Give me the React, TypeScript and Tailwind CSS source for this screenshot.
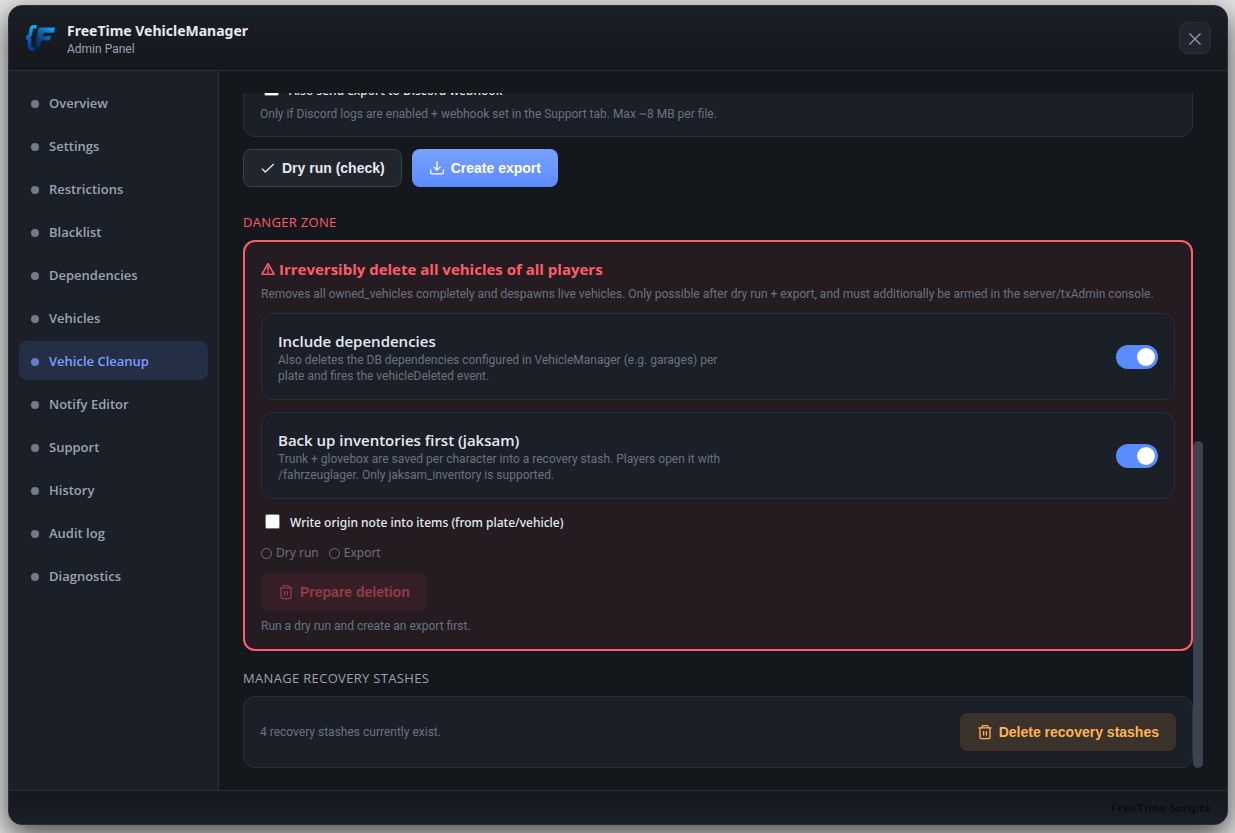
import { ReactNode, useState } from "react";

const navItems = [
  "Overview",
  "Settings",
  "Restrictions",
  "Blacklist",
  "Dependencies",
  "Vehicles",
  "Vehicle Cleanup",
  "Notify Editor",
  "Support",
  "History",
  "Audit log",
  "Diagnostics",
];

function Logo() {
  return (
    <svg viewBox="0 0 30 28" className="h-7 w-[30px]" fill="none" aria-hidden="true">
      <defs>
        <linearGradient id="brace" x1="0" y1="0" x2="0" y2="1">
          <stop offset="0" stopColor="#12a8f4" />
          <stop offset="0.5" stopColor="#0a63cc" />
          <stop offset="1" stopColor="#083a9c" />
        </linearGradient>
        <linearGradient id="mark" x1="1" y1="0" x2="0.3" y2="1">
          <stop offset="0" stopColor="#10b2ff" />
          <stop offset="0.5" stopColor="#0b5ba8" />
          <stop offset="1" stopColor="#0a2250" />
        </linearGradient>
      </defs>
      <path
        d="M11.6 2.7H9Q6.6 2.7 6.2 5.2L5.6 9.5Q5.2 12.6 1.6 13.4Q4.8 14.2 4.6 17L4.4 21Q4.4 25 7.4 25H9.5"
        stroke="url(#brace)"
        strokeWidth="3.6"
      />
      <path
        d="M15.5 3.5H30L28.8 8.8H18.8L17.8 12H26L24.8 16.6H16.4L14.6 23Q13.8 26 9.6 26L12.4 9Q12.9 3.5 15.5 3.5Z"
        fill="url(#mark)"
      />
    </svg>
  );
}

type IconProps = { className?: string };

function CheckIcon({ className }: IconProps) {
  return (
    <svg viewBox="0 0 16 16" className={className} fill="none" stroke="currentColor" strokeWidth="1.3" aria-hidden="true">
      <path d="M2 8.6l3.3 3.4L13.8 4" />
    </svg>
  );
}

function DownloadIcon({ className }: IconProps) {
  return (
    <svg viewBox="0 0 16 16" className={className} fill="none" stroke="currentColor" strokeWidth="1.3" aria-hidden="true">
      <path d="M8 1.2v8.6M4.5 6.6L8 10 11.5 6.6M1.7 9.5v2.9q0 1.4 1.4 1.4h9.8q1.4 0 1.4-1.4V9.5" />
    </svg>
  );
}

function TrashIcon({ className }: IconProps) {
  return (
    <svg viewBox="0 0 16 16" className={className} fill="none" stroke="currentColor" strokeWidth="1.3" aria-hidden="true">
      <path d="M1.5 3.8h13M5 3.8V2.7q0-1 1-1h4q1 0 1 1v1.1M3 3.8v9.4q0 1.4 1.4 1.4h7.2q1.4 0 1.4-1.4V3.8M6.6 7v4.6M9.4 7v4.6" />
    </svg>
  );
}

function WarningIcon({ className }: IconProps) {
  return (
    <svg viewBox="0 0 14 14" className={className} fill="none" stroke="currentColor" strokeWidth="1.6" aria-hidden="true">
      <path d="M7 1.6L13 12.2H1Z" strokeLinejoin="round" />
      <path d="M7 4.6v4.2M7 9.6v1.6" strokeWidth="1.5" />
    </svg>
  );
}

type ToggleCardProps = {
  id: string;
  title: string;
  children: ReactNode;
};

function ToggleCard({ id, title, children }: ToggleCardProps) {
  const [checked, setChecked] = useState(true);

  return (
    <div className="flex items-center justify-between gap-4 rounded-xl border border-[#2a303b] bg-[#1b1f27] px-4 pt-4 pb-[15px]">
      <div className="max-w-[445px]">
        <label
          htmlFor={id}
          className="block font-['Open_Sans',sans-serif] text-[15px] leading-[22px] font-semibold text-[#e6e9f0]"
        >
          {title}
        </label>
        <p className="font-['Roboto',sans-serif] text-xs leading-4 text-[#6b7280]">{children}</p>
      </div>
      <input
        id={id}
        type="checkbox"
        role="switch"
        checked={checked}
        onChange={(event) => setChecked(event.target.checked)}
        className="flex h-6 w-[42px] shrink-0 appearance-none items-center rounded-full bg-[#3a414d] px-[3px] before:size-[18px] before:rounded-full before:bg-white checked:justify-end checked:bg-[#5b8cff]"
      />
    </div>
  );
}

function Sidebar() {
  const [active, setActive] = useState("Vehicle Cleanup");

  return (
    <nav className="flex w-[210px] shrink-0 flex-col gap-1 border-r border-[#2a303b] bg-[#1b1f27] px-2.5 py-3">
      {navItems.map((item) => (
        <button
          key={item}
          type="button"
          onClick={() => setActive(item)}
          className={`flex h-[39px] items-center gap-2.5 rounded-lg px-3 pt-0.5 text-left font-['Open_Sans',sans-serif] text-[13px] font-semibold ${
            item === active ? "bg-[#242e45] text-[#7aa0ff]" : "text-[#9aa3b2]"
          }`}
        >
          <span className="size-2 rounded-full bg-current opacity-70" />
          {item}
        </button>
      ))}
    </nav>
  );
}

export default function App() {
  const [discord, setDiscord] = useState(false);
  const [originNote, setOriginNote] = useState(false);

  return (
    <div className="h-screen overflow-hidden bg-[#e4e4e5] pt-[5px] pr-[7px] pb-2 pl-2 font-['Noto_Sans','Open_Sans',sans-serif] text-[#e6e9f0]">
      <div className="flex h-full flex-col overflow-hidden rounded-[14px] border border-[#2a303b] bg-[#14171b] shadow-[0_10px_30px_rgba(0,0,0,0.7)]">
        <header className="flex h-[65px] shrink-0 items-center justify-between border-b border-[#2a303b] bg-linear-to-b from-[#1b1f27] to-[#14171b] px-4">
          <div className="flex items-center gap-3">
            <Logo />
            <div className="pt-0.5">
              <h1 className="text-sm leading-5 font-bold">FreeTime VehicleManager</h1>
              <p className="font-['Roboto',sans-serif] text-xs leading-4 text-[#9aa3b2]">Admin Panel</p>
            </div>
          </div>
          <button
            type="button"
            aria-label="Close"
            className="grid size-8 place-items-center rounded-lg border border-[#2a303b] bg-[#21252e] pt-0.5 text-[#9aa3b2]"
          >
            <svg viewBox="0 0 12 12" className="size-3" stroke="currentColor" strokeWidth="1.2" aria-hidden="true">
              <path d="M.5.5l11 11M11.5.5l-11 11" />
            </svg>
          </button>
        </header>

        <div className="flex min-h-0 flex-1">
          <Sidebar />

          <main className="flex min-w-0 flex-1 px-6 py-[22px]">
            <div className="flex min-w-0 flex-1 flex-col justify-end overflow-hidden">
              <section className="shrink-0 rounded-xl border border-[#2a303b] bg-[#1b1f27] px-4 pt-4 pb-[13px]">
                <label className="flex h-4 items-start gap-2.5 px-1 text-xs leading-5 font-medium">
                  <input
                    type="checkbox"
                    checked={discord}
                    onChange={(event) => setDiscord(event.target.checked)}
                    className="size-[15px] appearance-none rounded-xs border border-[#767676] bg-white checked:bg-[#5b8cff]"
                  />
                  Also send export to Discord webhook
                </label>
                <p className="mt-2 font-['Roboto',sans-serif] text-xs leading-[18px] text-[#6b7280]">
                  Only if Discord logs are enabled + webhook set in the Support tab. Max ~8 MB per file.
                </p>
              </section>

              <div className="mt-3 flex shrink-0 gap-2.5 font-['Liberation_Sans',Arial,sans-serif] text-sm font-semibold">
                <button
                  type="button"
                  className="flex h-[38px] items-center gap-1.5 rounded-lg border border-[#3a414d] bg-[#21252e] px-4"
                >
                  <CheckIcon className="size-4" />
                  Dry run (check)
                </button>
                <button
                  type="button"
                  className="flex h-[38px] items-center gap-1.5 rounded-lg bg-linear-to-b from-[#7aa0ff] to-[#5b8cff] px-[17px] text-white"
                >
                  <DownloadIcon className="size-4" />
                  Create export
                </button>
              </div>

              <h2 className="mt-[27px] shrink-0 font-['Open_Sans',sans-serif] text-[13px] leading-4 tracking-wide text-[#ff5c6c] uppercase">
                Danger zone
              </h2>

              <section className="mt-2.5 shrink-0 rounded-xl border-2 border-[#ff5c6c] bg-[#241c20] px-4 pt-4 pb-[15px]">
                <h3 className="flex items-center gap-1 font-['Open_Sans',sans-serif] text-[15px] leading-[22px] font-bold text-[#ff5c6c]">
                  <WarningIcon className="size-3.5" />
                  Irreversibly delete all vehicles of all players
                </h3>
                <p className="mt-1 font-['Roboto',sans-serif] text-xs leading-5 text-[#6b7280]">
                  Removes all owned_vehicles completely and despawns live vehicles. Only possible after dry run + export,
                  and must additionally be armed in the server/txAdmin console.
                </p>

                <div className="mt-[9px] flex flex-col gap-3">
                  <ToggleCard id="include-dependencies" title="Include dependencies">
                    Also deletes the DB dependencies configured in VehicleManager (e.g. garages) per plate and fires the
                    vehicleDeleted event.
                  </ToggleCard>
                  <ToggleCard id="backup-inventories" title="Back up inventories first (jaksam)">
                    Trunk + glovebox are saved per character into a recovery stash. Players open it with /fahrzeuglager.
                    Only jaksam_inventory is supported.
                  </ToggleCard>
                </div>

                <label className="mt-[15px] flex h-4 items-start gap-2.5 px-1 text-xs leading-[18px] font-medium">
                  <input
                    type="checkbox"
                    checked={originNote}
                    onChange={(event) => setOriginNote(event.target.checked)}
                    className="size-[15px] appearance-none rounded-xs border border-[#767676] bg-white checked:bg-[#5b8cff]"
                  />
                  Write origin note into items (from plate/vehicle)
                </label>

                <ul className="mt-[15px] flex gap-2.5 text-xs leading-4 text-[#6b7280]">
                  {["Dry run", "Export"].map((step) => (
                    <li key={step} className="flex items-center gap-1">
                      <span className="size-[11px] rounded-full border border-current" />
                      {step}
                    </li>
                  ))}
                </ul>

                <button
                  type="button"
                  disabled
                  className="mt-3 flex h-[38px] items-center gap-1.5 rounded-lg bg-[#351e25] px-[17px] font-['Liberation_Sans',Arial,sans-serif] text-sm font-semibold text-[#933b46]"
                >
                  <TrashIcon className="size-4" />
                  Prepare deletion
                </button>
                <p className="mt-[7px] font-['Roboto',sans-serif] text-xs leading-4 text-[#6b7280]">
                  Run a dry run and create an export first.
                </p>
              </section>

              <h2 className="mt-[19px] shrink-0 font-['Open_Sans',sans-serif] text-[13px] leading-4 tracking-wide text-[#9aa3b2] uppercase">
                Manage recovery stashes
              </h2>

              <section className="mt-2.5 flex shrink-0 items-center justify-between rounded-xl border border-[#2a303b] bg-[#1b1f27] p-4">
                <p className="font-['Roboto',sans-serif] text-xs leading-4 text-[#6b7280]">
                  4 recovery stashes currently exist.
                </p>
                <button
                  type="button"
                  className="flex h-[38px] items-center gap-1.5 rounded-lg bg-[#3b322c] px-[17px] font-['Liberation_Sans',Arial,sans-serif] text-sm font-semibold text-[#ffb454]"
                >
                  <TrashIcon className="size-4" />
                  Delete recovery stashes
                </button>
              </section>
            </div>

            <div className="flex w-2.5 shrink-0 flex-col justify-end" aria-hidden="true">
              <div className="h-[327px] rounded-full bg-[#3a434f]" />
            </div>
          </main>
        </div>

        <footer className="flex h-[34px] shrink-0 items-center justify-end border-t border-[#2a303b] bg-linear-to-b from-[#14171b] to-[#1b1f27] px-4 pt-0.5 text-[11px] font-bold tracking-wider text-[#0b0d10]">
          FreeTime Scripts
        </footer>
      </div>
    </div>
  );
}
